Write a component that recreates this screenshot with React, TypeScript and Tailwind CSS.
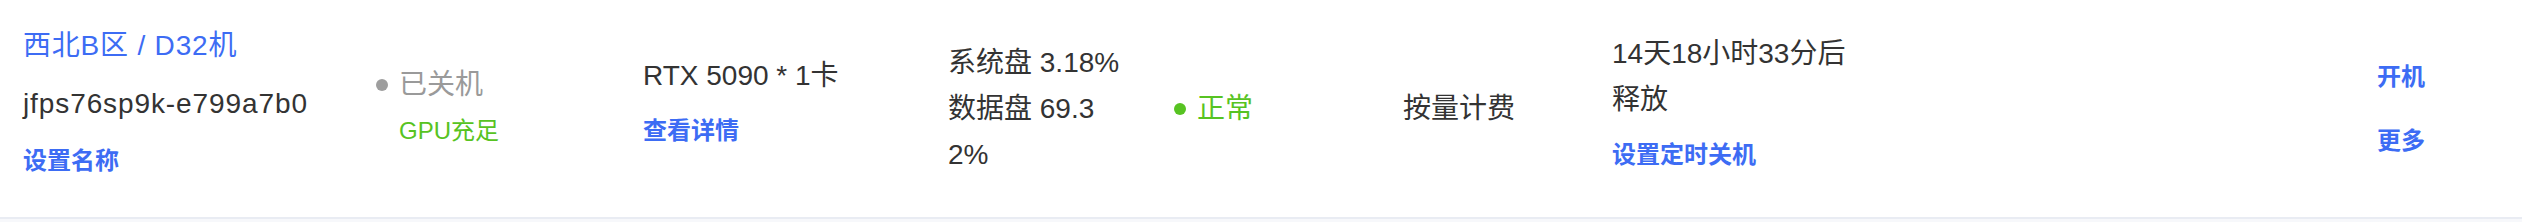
import React from "react";

const Dot = ({ color }: { color: string }) => (
  <span className={`inline-block w-3 h-3 rounded-full ${color}`} />
);

const App = () => {
  return (
    <div className="min-h-[222px] bg-[#f7f8fb] font-['Liberation_Sans','Noto_Sans_CJK_SC',sans-serif] text-[#333333]">
      <div className="flex items-center h-[219px] bg-white border-b-2 border-[#e9ecf3] pl-[23px]">
        {/* 实例名称 */}
        <div className="w-[353px] shrink-0 flex flex-col pb-[13px]">
          <div className="text-[28px] leading-[40px] tracking-[0.8px] text-[#3d6cf4]">西北B区 / D32机</div>
          <div className="mt-[18px] text-[28px] leading-[40px] tracking-[0.9px]">jfps76sp9k-e799a7b0</div>
          <div className="mt-[20px] text-[24px] leading-[34px] font-semibold text-[#3d6cf4]">设置名称</div>
        </div>

        {/* 状态 */}
        <div className="w-[267px] shrink-0 flex flex-col pb-[4px]">
          <div className="flex items-center gap-[11px] text-[28px] leading-[40px] text-[#9a9a9a]">
            <Dot color="bg-[#9e9e9e]" />
            <span>已关机</span>
          </div>
          <div className="mt-[9px] pl-[23px] text-[24px] leading-[34px] text-[#57c322]">GPU充足</div>
        </div>

        {/* 规格 */}
        <div className="w-[305px] shrink-0 flex flex-col pb-[14px]">
          <div className="text-[28px] leading-[40px]">RTX 5090 * 1卡</div>
          <div className="mt-[18px] text-[24px] leading-[34px] font-semibold text-[#3d6cf4]">查看详情</div>
        </div>

        {/* 磁盘 */}
        <div className="w-[226px] shrink-0 flex flex-col text-[28px] leading-[46px] whitespace-nowrap">
          <span>系统盘 3.18%</span>
          <span>数据盘 69.3</span>
          <span>2%</span>
        </div>

        {/* 健康 */}
        <div className="w-[229px] shrink-0 flex items-center gap-[11px] text-[28px] leading-[40px] text-[#57c322]">
          <Dot color="bg-[#57c322]" />
          <span>正常</span>
        </div>

        {/* 计费 */}
        <div className="w-[209px] shrink-0 text-[28px] leading-[40px]">按量计费</div>

        {/* 释放 */}
        <div className="w-[765px] shrink-0 flex flex-col pb-[15px]">
          <div className="text-[28px] leading-[46px] whitespace-nowrap">
            <span className="block">14天18小时33分后</span>
            <span className="block">释放</span>
          </div>
          <div className="mt-[15px] text-[24px] leading-[34px] font-semibold text-[#3d6cf4]">设置定时关机</div>
        </div>

        {/* 操作 */}
        <div className="flex flex-col text-[24px] leading-[34px] font-semibold text-[#3d6cf4]">
          <span>开机</span>
          <span className="mt-[30px]">更多</span>
        </div>
      </div>
    </div>
  );
};

export default App;
